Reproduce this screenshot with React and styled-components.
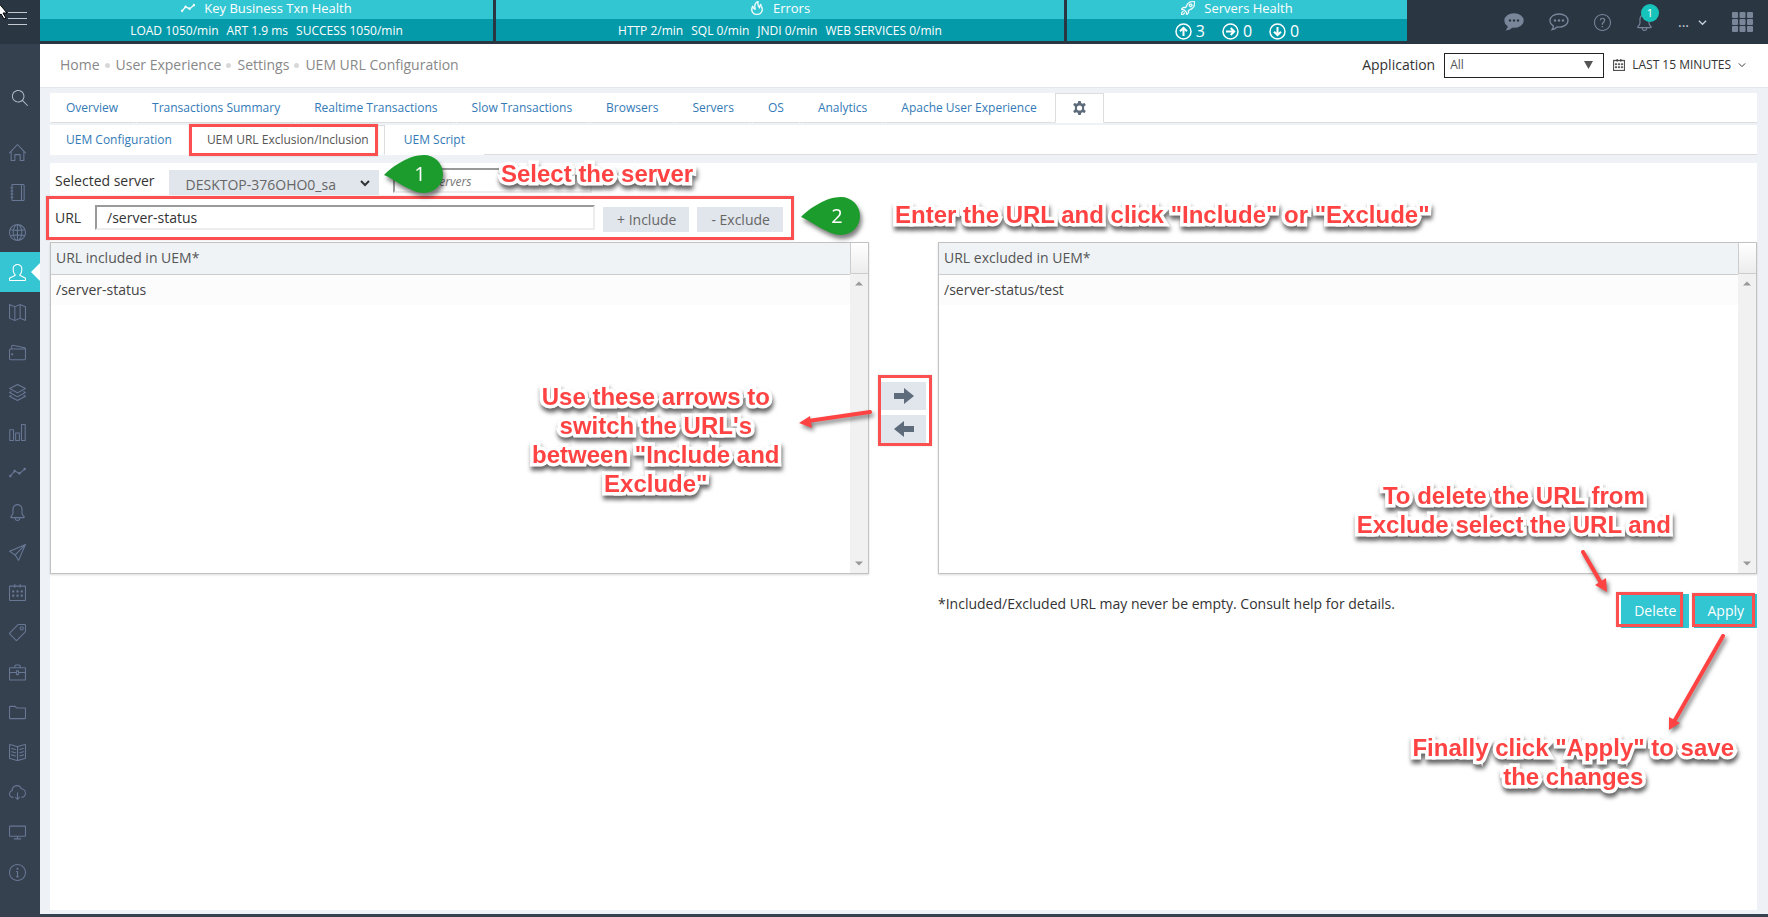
import React, { useState } from 'react';
import styled, { createGlobalStyle } from 'styled-components';
import {
  SlBell, SlBookOpen, SlBriefcase, SlCalender, SlChart, SlCloudDownload, SlFire,
  SlFolder, SlGlobe, SlGraph, SlHome, SlInfo, SlLayers, SlMagnifier, SlMap,
  SlNotebook, SlPaperPlane, SlQuestion, SlRocket, SlScreenDesktop, SlTag, SlUser, SlWallet,
} from 'react-icons/sl';

const GlobalStyle = createGlobalStyle`
  * { box-sizing: border-box; }
  body {
    margin: 0;
    background: #364150;
    color: #333;
    font-family: "Open Sans", sans-serif;
    font-size: 14px;
    line-height: 20px;
  }
  button, input, select { font: inherit; }
  a { text-decoration: none; }
  svg { display: block; }
`;

const Page = styled.div`
  position: relative;
  display: flex;
  flex-direction: column;
  min-height: 100vh;
  padding-bottom: 3px;
`;

/* top bar */

const TopBar = styled.header`
  display: flex;
  height: 44px;
  background: #2b3643;
`;

const MenuToggle = styled.button`
  display: flex;
  flex-direction: column;
  gap: 5px;
  width: 40px;
  padding: 12px 13px 0 8px;
  border: 0;
  background: none;

  span {
    height: 1px;
    width: 100%;
    background: #c3c9d1;
  }
`;

const Pointer = styled.svg`
  position: absolute;
  left: 0;
  top: 0;
`;

const HealthGrid = styled.div`
  flex: 1;
  display: grid;
  grid-template-columns: 453fr 568fr 340fr 358fr;
  column-gap: 3px;
`;

const HealthCard = styled.section`
  height: 41px;
  background: #059aaa;
  color: #fff;
  text-align: center;
`;

const HealthTitle = styled.h2`
  display: flex;
  align-items: center;
  justify-content: center;
  gap: 9px;
  height: 19px;
  margin: 0;
  padding-bottom: 3px;
  background: #32c5d2;
  font-size: 13px;
  font-weight: 500;
`;

const HealthStats = styled.div`
  display: flex;
  align-items: center;
  justify-content: center;
  gap: ${(p) => (p.$wide ? 17 : 8)}px;
  height: 22px;
  padding-top: 2px;
  font-size: ${(p) => (p.$wide ? 16 : 12)}px;
  font-weight: 500;

  span {
    display: flex;
    align-items: center;
    gap: 4px;
  }
`;

const UserMenu = styled.nav`
  display: flex;
  align-items: center;
  justify-content: flex-end;
  gap: 25px;
  height: 44px;
  padding-right: 15px;
`;

const IconButton = styled.button`
  position: relative;
  display: flex;
  align-items: center;
  gap: 9px;
  padding: 0;
  border: 0;
  background: none;
  color: ${(p) => (p.$light ? '#c6cfda' : '#79869a')};
`;

const Badge = styled.span`
  position: absolute;
  left: 5px;
  top: -10px;
  width: 18px;
  height: 18px;
  border-radius: 50%;
  background: #17c4bb;
  color: #fff;
  font-size: 11px;
  line-height: 18px;
`;

/* side bar */

const Body = styled.div`
  flex: 1;
  display: flex;
`;

const SideBar = styled.nav`
  width: 40px;
  padding-top: 34px;
  background: #364150;
`;

const SideLink = styled.a`
  position: relative;
  display: flex;
  align-items: center;
  height: 40px;
  padding-left: ${(p) => (p.$search ? 12 : 9)}px;
  margin-bottom: ${(p) => (p.$search ? 14 : 0)}px;
  background: ${(p) => (p.$active ? '#36c6d3' : 'none')};
  color: ${(p) => (p.$active ? '#fff' : p.$search ? '#b4bcc8' : '#677794')};

  &::after {
    content: '';
    display: ${(p) => (p.$active ? 'block' : 'none')};
    position: absolute;
    right: 0;
    top: 11px;
    border: 9px solid transparent;
    border-left: 0;
    border-right-color: #fff;
  }
`;

/* content */

const Content = styled.div`
  flex: 1;
  display: flex;
  flex-direction: column;
  background: #eef1f5;
`;

const PageBar = styled.div`
  display: flex;
  align-items: center;
  justify-content: space-between;
  height: 44px;
  padding: 0 22px 1px 20px;
  border-bottom: 1px solid #e3e7ec;
  background: #fff;
`;

const Crumbs = styled.ol`
  display: flex;
  margin: 0;
  padding: 0;
  list-style: none;

  li { display: flex; align-items: center; }
  li + li::before {
    content: '';
    width: 5px;
    height: 5px;
    margin: 0 6px 0 5px;
    border-radius: 50%;
    background: #d8d8d8;
  }
  a { color: #888; }
`;

const Filters = styled.div`
  display: flex;
  align-items: center;
  gap: 9px;
`;

const SelectBox = styled.div`
  display: flex;
  align-items: center;

  select {
    appearance: none;
    width: 160px;
    height: 25px;
    padding: 0 5px;
    border: 1px solid #222;
    border-radius: 0;
    background: #fff;
    color: #555;
    font-size: 12px;
  }
  svg { margin-left: -20px; margin-right: 11px; pointer-events: none; }
`;

const PeriodButton = styled.button`
  display: flex;
  align-items: center;
  gap: 7px;
  padding: 0;
  border: 0;
  background: none;
  color: #333;
  font-size: 12px;
`;

const Wrapper = styled.main`
  flex: 1;
  display: flex;
  flex-direction: column;
  padding: 5px 11px 5px 10px;
`;

const Tabs = styled.div`
  display: flex;
  height: 30px;
  margin-bottom: 2px;
  background: #fff;

  &::after {
    content: '';
    flex: 1;
    border-bottom: 1px solid #ddd;
  }
`;

const Tab = styled.a`
  display: flex;
  align-items: center;
  padding: 0 15px;
  border: 1px solid ${(p) => (p.$active ? '#ddd' : 'transparent')};
  border-bottom-color: ${(p) => (p.$active || p.$sub ? 'transparent' : '#ddd')};
  border-left-color: ${(p) => (p.$active && !p.$sub ? '#ddd' : 'transparent')};
  color: ${(p) => (p.$active ? '#555' : '#337ab7')};
  font-size: 12px;
  white-space: nowrap;
`;

const TabSpace = styled.span`
  width: ${(p) => (p.$sub ? 3 : 2)}px;
  border-bottom: 1px solid ${(p) => (p.$sub ? 'transparent' : '#ddd')};
`;

const Panel = styled.section`
  position: relative;
  flex: 1;
  margin-top: 6px;
  margin-bottom: -1px;
  background: #fff;
`;

const ServerRow = styled.div`
  display: flex;
  align-items: flex-start;
  gap: 14px;
  height: 33px;
  padding: 5px 5px 0;
  line-height: 26px;
`;

const ServerSelect = styled.div`
  display: flex;
  align-items: center;
  margin-top: 2px;

  select {
    appearance: none;
    width: 210px;
    height: 25px;
    padding: 2px 17px 0;
    border: 0;
    border-radius: 0;
    background: #e1e5ec;
    color: #666;
  }
  svg { margin-left: -19px; margin-right: 9px; pointer-events: none; }
`;

const TextInput = styled.input`
  width: ${(p) => p.$width}px;
  height: 25px;
  padding: 0 10px;
  border: 2px solid;
  border-color: #9a9a9a #ededed #ededed #9a9a9a;
  background: #fff;
  color: #333;

  &::placeholder {
    color: #777;
    font-size: 12px;
    font-style: italic;
  }
`;

/* red frame laid over the part it points out */
const Frame = styled.div`
  position: relative;
  display: flex;
  width: fit-content;

  &::after {
    content: '';
    position: absolute;
    inset: ${(p) => p.$inset || '0'};
    border: 3px solid #fc4f4f;
    box-shadow: 0 0 2px rgba(0, 0, 0, 0.15);
    pointer-events: none;
  }
`;

const UrlRow = styled.div`
  display: flex;
  align-items: flex-start;
  height: 44px;
  padding: 9px 11px 0 5px;

  label { width: 40px; line-height: 26px; }
  button { margin: 2px 0 0 8px; }
`;

const GreyButton = styled.button`
  height: 25px;
  padding: 0 13px 0 14px;
  border: 0;
  background: #e1e5ec;
  color: #666;
`;

const Lists = styled.div`
  display: grid;
  grid-template-columns: 1fr auto 1fr;
  align-items: center;
  margin-top: 2px;
`;

const UrlTable = styled.div`
  display: grid;
  grid-template-columns: 1fr 18px;
  height: 332px;
  grid-template-rows: 31px 1fr;
  border: 1px solid #c2c2c2;
  box-shadow: 0 1px 2px rgba(0, 0, 0, 0.15);
  color: #555;

  table {
    grid-row: 1 / 3;
    width: 100%;
    height: 62px;
    border-collapse: collapse;
    color: #444;
    text-align: left;
  }
  th, td { height: 31px; padding: 0 5px; font-weight: 400; }
  th { background: #eff3f6; border-bottom: 1px solid #ccc; color: #555; }
  td { background: #fcfcfc; }
`;

const HeadCorner = styled.div`
  border-left: 1px solid #ccc;
  border-bottom: 1px solid #ccc;
  background: linear-gradient(#fff, #ececec);
`;

const ScrollTrack = styled.div`
  display: flex;
  flex-direction: column;
  justify-content: space-between;
  align-items: center;
  padding: 7px 0;
  background: #f1f1f1;
`;

const MoveButtons = styled.div`
  display: flex;
  flex-direction: column;
  gap: 5px;
  padding: 11px 12px 3px;

  button {
    display: flex;
    align-items: center;
    justify-content: center;
    width: 45px;
    height: 28px;
    padding: 0;
    border: 0;
    background: #e1e5ec;
    color: #5d6b7b;
  }
`;

const Bottom = styled.div`
  display: grid;
  grid-template-columns: 1fr 1fr;
  column-gap: 69px;
`;

const BottomRight = styled.div`
  grid-column: 2;
  display: flex;
  justify-content: space-between;
  padding-top: 20px;

  p { margin: 0; }
`;

const Actions = styled.div`
  display: flex;
  gap: 5px;
`;

const PrimaryButton = styled.button`
  height: 34px;
  padding: 0 13px;
  border: 0;
  background: #32c5d2;
  color: #fff;
`;

/* callouts over the page */

const Note = styled.p`
  position: absolute;
  left: ${(p) => p.$left};
  right: ${(p) => p.$right};
  top: ${(p) => p.$top}px;
  margin: 0;
  color: #ff4343;
  font: bold 24px/29px "Liberation Sans", Arial, sans-serif;
  text-align: center;
  white-space: nowrap;
  -webkit-text-stroke: 7px #fff;
  paint-order: stroke fill;
  filter: drop-shadow(1px 4px 2px rgba(0, 0, 0, 0.6));
  pointer-events: none;
`;

const ArrowSvg = styled.svg`
  position: absolute;
  left: ${(p) => p.$left};
  right: ${(p) => p.$right};
  top: ${(p) => p.$top}px;
  filter: drop-shadow(2px 3px 2px rgba(0, 0, 0, 0.5));
  pointer-events: none;
`;

const StepPin = styled.div`
  position: absolute;
  left: ${(p) => p.$left}px;
  top: ${(p) => p.$top}px;
  filter: drop-shadow(2px 4px 2px rgba(0, 0, 0, 0.5));

  span {
    position: absolute;
    left: 25px;
    top: 5px;
    width: 22px;
    color: #fff;
    font-size: 20px;
    line-height: 28px;
    text-align: center;
  }
`;

const Bubble = ({ filled }) => (
  <svg width="20" height="18" viewBox="0 0 20 18">
    <path
      d="M10 1C5 1 1 3.7 1 7.6c0 2.3 1.3 4.2 3.4 5.3 0 1.4-.5 2.7-1.4 3.8 2.2-.3 3.7-1.3 4.9-2.7 6.3.7 11.1-2.3 11.1-6.4C19 3.7 15 1 10 1z"
      fill={filled ? 'currentColor' : 'none'}
      stroke="currentColor"
      strokeWidth="1.3"
    />
    <g fill={filled ? '#2b3643' : 'currentColor'}>
      <circle cx="6" cy="7.5" r="1.2" />
      <circle cx="10" cy="7.5" r="1.2" />
      <circle cx="14" cy="7.5" r="1.2" />
    </g>
  </svg>
);

const Chevron = ({ size = 9, weight = 1.2 }) => (
  <svg width={size} height={size} viewBox="0 0 10 10" fill="none" stroke="currentColor" strokeWidth={weight}>
    <path d="M1 3l4 4 4-4" />
  </svg>
);

const DownTriangle = () => (
  <svg width="9" height="8" viewBox="0 0 9 8"><path d="M0 0h9L4.5 8z" fill="#555" /></svg>
);

const ScrollArrow = ({ down }) => (
  <svg width="8" height="5" viewBox="0 0 8 5"><path d={down ? 'M0 .5h8l-4 4z' : 'M0 4.5h8l-4-4z'} fill="#999" /></svg>
);

const CircleArrow = ({ turn }) => (
  <svg width="17" height="17" viewBox="0 0 17 17" fill="none" stroke="#fff">
    <circle cx="8.5" cy="8.5" r="7.5" strokeWidth="1.5" />
    <path transform={`rotate(${turn} 8.5 8.5)`} d="M8.5 13V4.800M5 8.300l3.500-3.500L12 8.300" strokeWidth="2" />
  </svg>
);

const MoveArrow = ({ left }) => (
  <svg width="20" height="16" viewBox="0 0 20 16">
    <path d={left ? 'M0 8l10-8v5h10v6H10v5z' : 'M20 8L10 0v5H0v6h10v5z'} fill="currentColor" />
  </svg>
);

const Gear = () => (
  <svg width="17" height="14" viewBox="0 0 17 14">
    <path
      fillRule="evenodd"
      fill="#5d6b7b"
      d="M7.300 0h2.400l.5 2.100 1.200.7 2.200-.8 1.200 2.100-1.700 1.500v2.800l1.700 1.500-1.200 2.100-2.200-.8-1.200.7-.5 2.100H7.300l-.5-2.100-1.200-.7-2.200.8-1.200-2.100 1.700-1.500V5.600L2.200 4.100 3.400 2l2.200.8 1.200-.7zM8.500 4.400a2.600 2.600 0 100 5.200 2.600 2.600 0 000-5.200z"
    />
  </svg>
);

const AppGrid = () => (
  <svg width="21" height="20" viewBox="0 0 21 20" fill="currentColor">
    {[0, 1, 2].map((r) => [0, 1, 2].map((c) => (
      <rect key={`${r}${c}`} x={c * 7.5} y={r * 7} width="6" height="6" rx="1" />
    )))}
  </svg>
);

const Step = ({ n, left, top }) => (
  <StepPin $left={left} $top={top}>
    <svg width="60" height="38" viewBox="0 0 60 38">
      <path d="M0 20C9 11 25 0 40 0a19 19 0 010 38C27 38 12 25 0 20z" fill="#1c9c2c" />
    </svg>
    <span>{n}</span>
  </StepPin>
);

const sideItems = [
  ['Home', SlHome], ['Notebook', SlNotebook], ['Web', SlGlobe], ['User Experience', SlUser],
  ['Map', SlMap], ['Wallet', SlWallet], ['Layers', SlLayers], ['Charts', SlChart],
  ['Trends', SlGraph], ['Alerts', SlBell], ['Messages', SlPaperPlane], ['Calendar', SlCalender],
  ['Tags', SlTag], ['Business', SlBriefcase], ['Files', SlFolder], ['Docs', SlBookOpen],
  ['Downloads', SlCloudDownload], ['Desktop', SlScreenDesktop], ['Info', SlInfo],
];

const crumbs = ['Home', 'User Experience', 'Settings', 'UEM URL Configuration'];

const mainTabs = [
  'Overview', 'Transactions Summary', 'Realtime Transactions', 'Slow Transactions',
  'Browsers', 'Servers', 'OS', 'Analytics', 'Apache User Experience',
];

const UrlList = ({ title, urls }) => (
  <UrlTable>
    <table>
      <thead><tr><th>{title}</th></tr></thead>
      <tbody>{urls.map((u) => <tr key={u}><td>{u}</td></tr>)}</tbody>
    </table>
    <HeadCorner />
    <ScrollTrack>
      <ScrollArrow />
      <ScrollArrow down />
    </ScrollTrack>
  </UrlTable>
);

const App = () => {
  const [url, setUrl] = useState('/server-status');

  return (
    <Page>
      <GlobalStyle />
      <TopBar>
        <MenuToggle aria-label="Toggle menu"><span /><span /><span /></MenuToggle>
        <HealthGrid>
          <HealthCard>
            <HealthTitle><SlGraph size={14} strokeWidth={30} stroke="#fff" />Key Business Txn Health</HealthTitle>
            <HealthStats>
              <span>LOAD 1050/min</span><span>ART 1.9 ms</span><span>SUCCESS 1050/min</span>
            </HealthStats>
          </HealthCard>
          <HealthCard>
            <HealthTitle><SlFire size={14} strokeWidth={30} stroke="#fff" />Errors</HealthTitle>
            <HealthStats>
              <span>HTTP 2/min</span><span>SQL 0/min</span><span>JNDI 0/min</span><span>WEB SERVICES 0/min</span>
            </HealthStats>
          </HealthCard>
          <HealthCard>
            <HealthTitle><SlRocket size={14} strokeWidth={30} stroke="#fff" />Servers Health</HealthTitle>
            <HealthStats $wide>
              <span><CircleArrow turn={0} />3</span>
              <span><CircleArrow turn={90} />0</span>
              <span><CircleArrow turn={180} />0</span>
            </HealthStats>
          </HealthCard>
          <UserMenu>
            <IconButton aria-label="Feedback"><Bubble filled /></IconButton>
            <IconButton aria-label="Chat"><Bubble /></IconButton>
            <IconButton aria-label="Help"><SlQuestion size={17} /></IconButton>
            <IconButton aria-label="Notifications"><SlBell size={17} /><Badge>1</Badge></IconButton>
            <IconButton $light>...<Chevron weight={1.5} /></IconButton>
            <IconButton aria-label="Apps"><AppGrid /></IconButton>
          </UserMenu>
        </HealthGrid>
      </TopBar>

      <Body>
        <SideBar>
          <SideLink href="#search" $search aria-label="Search"><SlMagnifier size={16} /></SideLink>
          {sideItems.map(([name, Icon]) => (
            <SideLink key={name} href="#" aria-label={name} $active={name === 'User Experience'}>
              <Icon size={17} />
            </SideLink>
          ))}
        </SideBar>

        <Content>
          <PageBar>
            <Crumbs>
              {crumbs.map((c) => <li key={c}><a href="#">{c}</a></li>)}
            </Crumbs>
            <Filters>
              <label htmlFor="application">Application</label>
              <SelectBox>
                <select id="application"><option>All</option></select>
                <DownTriangle />
              </SelectBox>
              <PeriodButton>
                <SlCalender size={12} strokeWidth={30} stroke="#333" />LAST 15 MINUTES<Chevron size={8} />
              </PeriodButton>
            </Filters>
          </PageBar>

          <Wrapper>
            <Tabs>
              {mainTabs.map((t) => (
                <React.Fragment key={t}>
                  <Tab href="#">{t}</Tab>
                  <TabSpace />
                </React.Fragment>
              ))}
              <Tab href="#" $active aria-label="Settings"><Gear /></Tab>
            </Tabs>
            <Tabs>
              <Tab href="#" $sub>UEM Configuration</Tab>
              <TabSpace $sub />
              <Frame as="span" $inset="-1px 7px -1px -2px">
                <Tab href="#" $sub $active>UEM URL Exclusion/Inclusion</Tab>
              </Frame>
              <TabSpace $sub />
              <Tab href="#" $sub>UEM Script</Tab>
              <TabSpace $sub />
            </Tabs>

            <Panel>
              <ServerRow>
                <label htmlFor="server">Selected server</label>
                <ServerSelect>
                  <select id="server"><option>DESKTOP-376OHO0_sa</option></select>
                  <Chevron size={10} weight={2} />
                </ServerSelect>
                <TextInput $width={199} placeholder="Filter servers" aria-label="Filter servers" />
              </ServerRow>

              <Frame $inset="0 0 0 -4px">
                <UrlRow>
                  <label htmlFor="url">URL</label>
                  <TextInput id="url" $width={500} value={url} onChange={(e) => setUrl(e.target.value)} />
                  <GreyButton>+ Include</GreyButton>
                  <GreyButton>- Exclude</GreyButton>
                </UrlRow>
              </Frame>

              <Lists>
                <UrlList title="URL included in UEM*" urls={['/server-status']} />
                <Frame $inset="4px 6px 0 9px">
                  <MoveButtons>
                    <button aria-label="Move to excluded"><MoveArrow /></button>
                    <button aria-label="Move to included"><MoveArrow left /></button>
                  </MoveButtons>
                </Frame>
                <UrlList title="URL excluded in UEM*" urls={['/server-status/test']} />
              </Lists>

              <Bottom>
                <BottomRight>
                  <p>*Included/Excluded URL may never be empty. Consult help for details.</p>
                  <Actions>
                    <Frame $inset="-2px 6px 1px -5px"><PrimaryButton>Delete</PrimaryButton></Frame>
                    <Frame $inset="-1px 2px 1px -2px"><PrimaryButton>Apply</PrimaryButton></Frame>
                  </Actions>
                </BottomRight>
              </Bottom>

              <Step n={1} left={334} top={-8} />
              <Step n={2} left={751} top={34} />
              <Note $left="451px" $top={-4}>Select the server</Note>
              <Note $left="845px" $top={37}>Enter the URL and click "Include" or "Exclude"</Note>
              <Note $right="calc(50% + 124px)" $top={219}>
                Use these arrows to<br />switch the URL's<br />between "Include and<br />Exclude"
              </Note>
              <ArrowSvg $right="calc(50% + 32px)" $top={243} width="74" height="26" viewBox="0 0 74 26">
                <path d="M72 6L10 15" stroke="#ff4343" strokeWidth="4" strokeLinecap="round" />
                <path d="M1 17L12 10l2 12z" fill="#ff4343" />
              </ArrowSvg>
              <Note $right="86px" $top={318}>
                To delete the URL from<br />Exclude select the URL and
              </Note>
              <ArrowSvg $right="149px" $top={386} width="28" height="46" viewBox="0 0 28 46">
                <path d="M3 3L21 34" stroke="#ff4343" strokeWidth="4" strokeLinecap="round" />
                <path d="M27 43L15 36l11-7z" fill="#ff4343" />
              </ArrowSvg>
              <Note $right="23px" $top={570}>
                Finally click "Apply" to save<br />the changes
              </Note>
              <ArrowSvg $right="31px" $top={470} width="60" height="100" viewBox="0 0 60 100">
                <path d="M57 3L9 87" stroke="#ff4343" strokeWidth="4" strokeLinecap="round" />
                <path d="M3 97V84l11 6z" fill="#ff4343" />
              </ArrowSvg>
            </Panel>
          </Wrapper>
        </Content>
      </Body>

      <Pointer width="10" height="20" viewBox="0 0 10 20" aria-hidden="true">
        <path d="M-3 1L7 13H3l3 5-2 1-3-5-4 3z" fill="#fff" stroke="#000" />
      </Pointer>
    </Page>
  );
};

export default App;
